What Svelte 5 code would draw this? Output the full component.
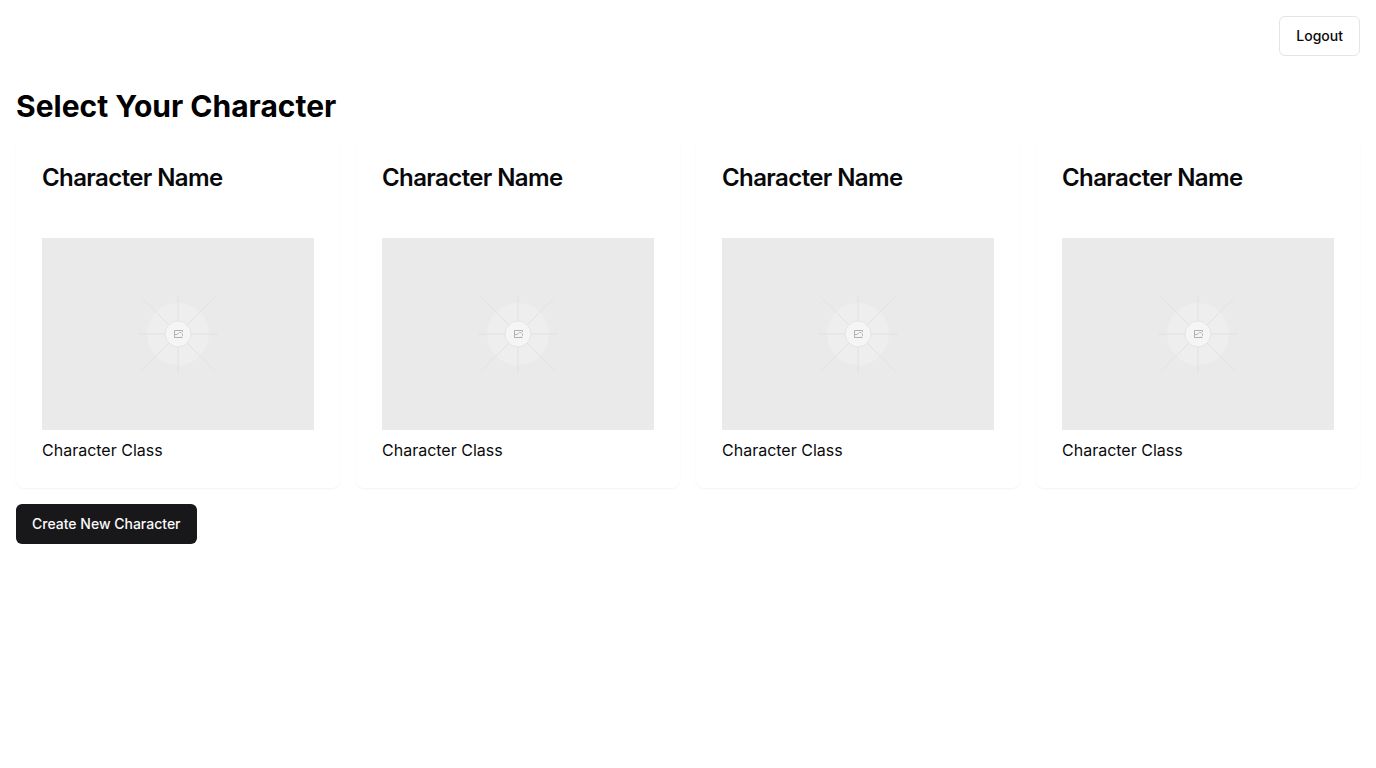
<script>
  const characters = [1, 2, 3, 4].map((id) => ({ id, name: 'Character Name', role: 'Character Class' }));
</script>

<header>
  <button class="button outline" type="button">Logout</button>
</header>

<main>
  <h1>Select Your Character</h1>
  <div class="grid">
    {#each characters as character (character.id)}
      <article class="card">
        <div class="card-header">
          <h2>{character.name}</h2>
        </div>
        <div class="card-content">
          <svg class="portrait" viewBox="0 0 272 192" preserveAspectRatio="xMidYMid slice" aria-hidden="true">
            <defs>
              <radialGradient id="fade-{character.id}" gradientUnits="userSpaceOnUse" cx="136" cy="96" r="62">
                <stop offset="0" stop-color="#e1e1e1" />
                <stop offset="0.7" stop-color="#e1e1e1" />
                <stop offset="1" stop-color="#e1e1e1" stop-opacity="0" />
              </radialGradient>
            </defs>
            <rect width="272" height="192" fill="#eaeaea" />
            <circle cx="136" cy="96" r="31" fill="#eeeeee" />
            <path
              d="M96 96H176M136 57V135M98 58L174 134M174 58L98 134"
              fill="none"
              stroke="url(#fade-{character.id})"
            />
            <circle cx="136" cy="96" r="13" fill="#f5f5f5" stroke="#e4e4e4" />
            <g fill="none" stroke="#b0b0b0">
              <path d="M140.5 94V92.5H132.5V99.5H140.5" />
              <path d="M132.5 96.5H135L137.5 94.5H139L140.5 96V97.5L139.5 98.5" stroke-width="0.9" />
            </g>
          </svg>
          <p>{character.role}</p>
        </div>
      </article>
    {/each}
  </div>
  <button class="button primary" type="button">Create New Character</button>
</main>

<style>
  :global(body) {
    margin: 0;
    background: #ffffff;
    color: #000000;
    font-family: Inter, sans-serif;
    font-size: 16px;
    line-height: 24px;
  }

  header {
    display: flex;
    justify-content: flex-end;
    padding: 16px;
  }

  main {
    padding: 16px;
  }

  h1,
  h2,
  p {
    margin: 0;
  }

  h1 {
    margin-bottom: 16px;
    font-size: 30px;
    line-height: 36px;
    font-weight: 700;
  }

  .grid {
    display: grid;
    grid-template-columns: repeat(4, minmax(0, 1fr));
    gap: 16px;
    margin-bottom: 16px;
  }

  .card {
    border: 2px solid transparent;
    border-radius: 8px;
    background: #ffffff;
    color: #09090b;
    box-shadow: 0 1px 2px rgba(0, 0, 0, 0.05);
  }

  .card-header,
  .card-content {
    padding: 24px;
  }

  h2 {
    font-size: 24px;
    line-height: 24px;
    font-weight: 600;
    letter-spacing: -0.025em;
  }

  .portrait {
    display: block;
    width: 100%;
    height: 192px;
    margin-bottom: 8px;
  }

  .button {
    box-sizing: border-box;
    height: 40px;
    padding: 8px 16px;
    border: 0;
    border-radius: 6px;
    font: 500 14px/20px Inter, sans-serif;
    cursor: pointer;
  }

  .outline {
    border: 1px solid #e4e4e7;
    background: #ffffff;
    color: #09090b;
  }

  .primary {
    background: #18181b;
    color: #fafafa;
  }
</style>
